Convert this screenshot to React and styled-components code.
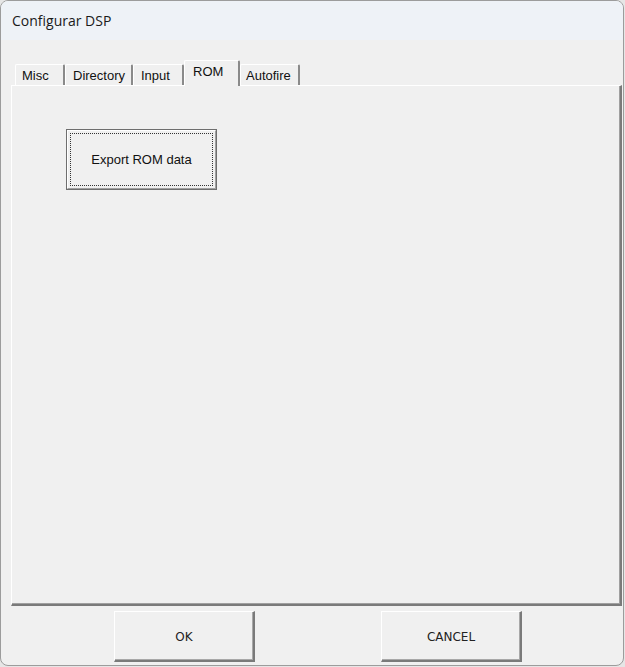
import React from 'react';
import styled, { createGlobalStyle } from 'styled-components';

const GlobalStyle = createGlobalStyle`
  html, body {
    margin: 0;
    padding: 0;
    background: #e6e6e6;
  }
`;

const Window = styled.div`
  box-sizing: border-box;
  width: 624px;
  height: 666px;
  border: 1px solid #9c9c9c;
  border-radius: 8px;
  overflow: hidden;
  background: #f0f0f0;
  display: flex;
  flex-direction: column;
`;

const TitleBar = styled.div`
  height: 39px;
  flex-shrink: 0;
  background: #eef2f7;
  display: flex;
  align-items: center;
  padding-left: 11px;
  font-family: 'Open Sans', 'Noto Sans', sans-serif;
  font-size: 14px;
  color: #1a1a1a;
`;

const Body = styled.div`
  flex: 1;
  display: flex;
  flex-direction: column;
  padding: 20px 0 0 10px;
  font-family: 'Liberation Sans', Arial, sans-serif;
  font-size: 13px;
  color: #111;
`;

const TabRow = styled.div`
  display: flex;
  align-items: flex-end;
  height: 25px;
  margin-left: 4px;
  position: relative;
  z-index: 1;
`;

const Tab = styled.div`
  box-sizing: border-box;
  width: ${({ w }) => w}px;
  height: ${({ active }) => (active ? 26 : 21)}px;
  margin-bottom: ${({ active }) => (active ? -1 : 0)}px;
  padding-left: ${({ pad }) => pad}px;
  padding-bottom: ${({ active }) => (active ? 5 : 0)}px;
  display: flex;
  align-items: center;
  background: #f0f0f0;
  border-top: 1px solid #ffffff;
  border-left: 1px solid #ffffff;
  border-right: 2px solid #8a8a8a;
  border-radius: 2px 2px 0 0;
  white-space: nowrap;
`;

const Panel = styled.div`
  box-sizing: border-box;
  width: 611px;
  height: 521px;
  border-top: 1px solid #ffffff;
  border-left: 1px solid #ffffff;
  border-right: 2px solid #7a7a7a;
  border-bottom: 2px solid #7a7a7a;
  box-shadow: inset -1px -1px 0 #a0a0a0;
  padding: 43px 0 0 54px;
`;

const DefaultButton = styled.div`
  box-sizing: border-box;
  width: 151px;
  height: 61px;
  border: 1px solid #6e6e6e;
  background: #f0f0f0;
`;

const ButtonFace = styled.div`
  box-sizing: border-box;
  height: 100%;
  border-top: 1px solid #ffffff;
  border-left: 1px solid #ffffff;
  border-right: 1px solid #a0a0a0;
  border-bottom: 1px solid #a0a0a0;
  padding: 2px;
`;

const FocusRing = styled.div`
  box-sizing: border-box;
  height: 100%;
  border: 1px dotted #333;
  display: flex;
  align-items: center;
  justify-content: center;
  padding-bottom: 1px;
`;

const Footer = styled.div`
  display: flex;
  padding: 5px 0 0 103px;
  gap: 126px;
`;

const DialogButton = styled.div`
  box-sizing: border-box;
  width: 141px;
  height: 51px;
  background: #f0f0f0;
  border-top: 1px solid #ffffff;
  border-left: 1px solid #ffffff;
  border-right: 2px solid #7a7a7a;
  border-bottom: 2px solid #7a7a7a;
  box-shadow: inset -1px -1px 0 #a8a8a8;
  display: flex;
  align-items: center;
  justify-content: center;
  font-family: 'DejaVu Sans', sans-serif;
  font-size: 12px;
  color: #222;
  padding-top: 1px;
`;

const tabs = [
  { label: 'Misc', w: 50, pad: 6 },
  { label: 'Directory', w: 68, pad: 7 },
  { label: 'Input', w: 51, pad: 7 },
  { label: 'ROM', w: 56, pad: 8, active: true },
  { label: 'Autofire', w: 60, pad: 5 },
];

export default function App() {
  return (
    <>
      <GlobalStyle />
      <Window>
        <TitleBar>Configurar DSP</TitleBar>
        <Body>
          <TabRow>
            {tabs.map((t) => (
              <Tab key={t.label} w={t.w} pad={t.pad} active={t.active}>
                {t.label}
              </Tab>
            ))}
          </TabRow>
          <Panel>
            <DefaultButton>
              <ButtonFace>
                <FocusRing>Export ROM data</FocusRing>
              </ButtonFace>
            </DefaultButton>
          </Panel>
          <Footer>
            <DialogButton>OK</DialogButton>
            <DialogButton>CANCEL</DialogButton>
          </Footer>
        </Body>
      </Window>
    </>
  );
}
